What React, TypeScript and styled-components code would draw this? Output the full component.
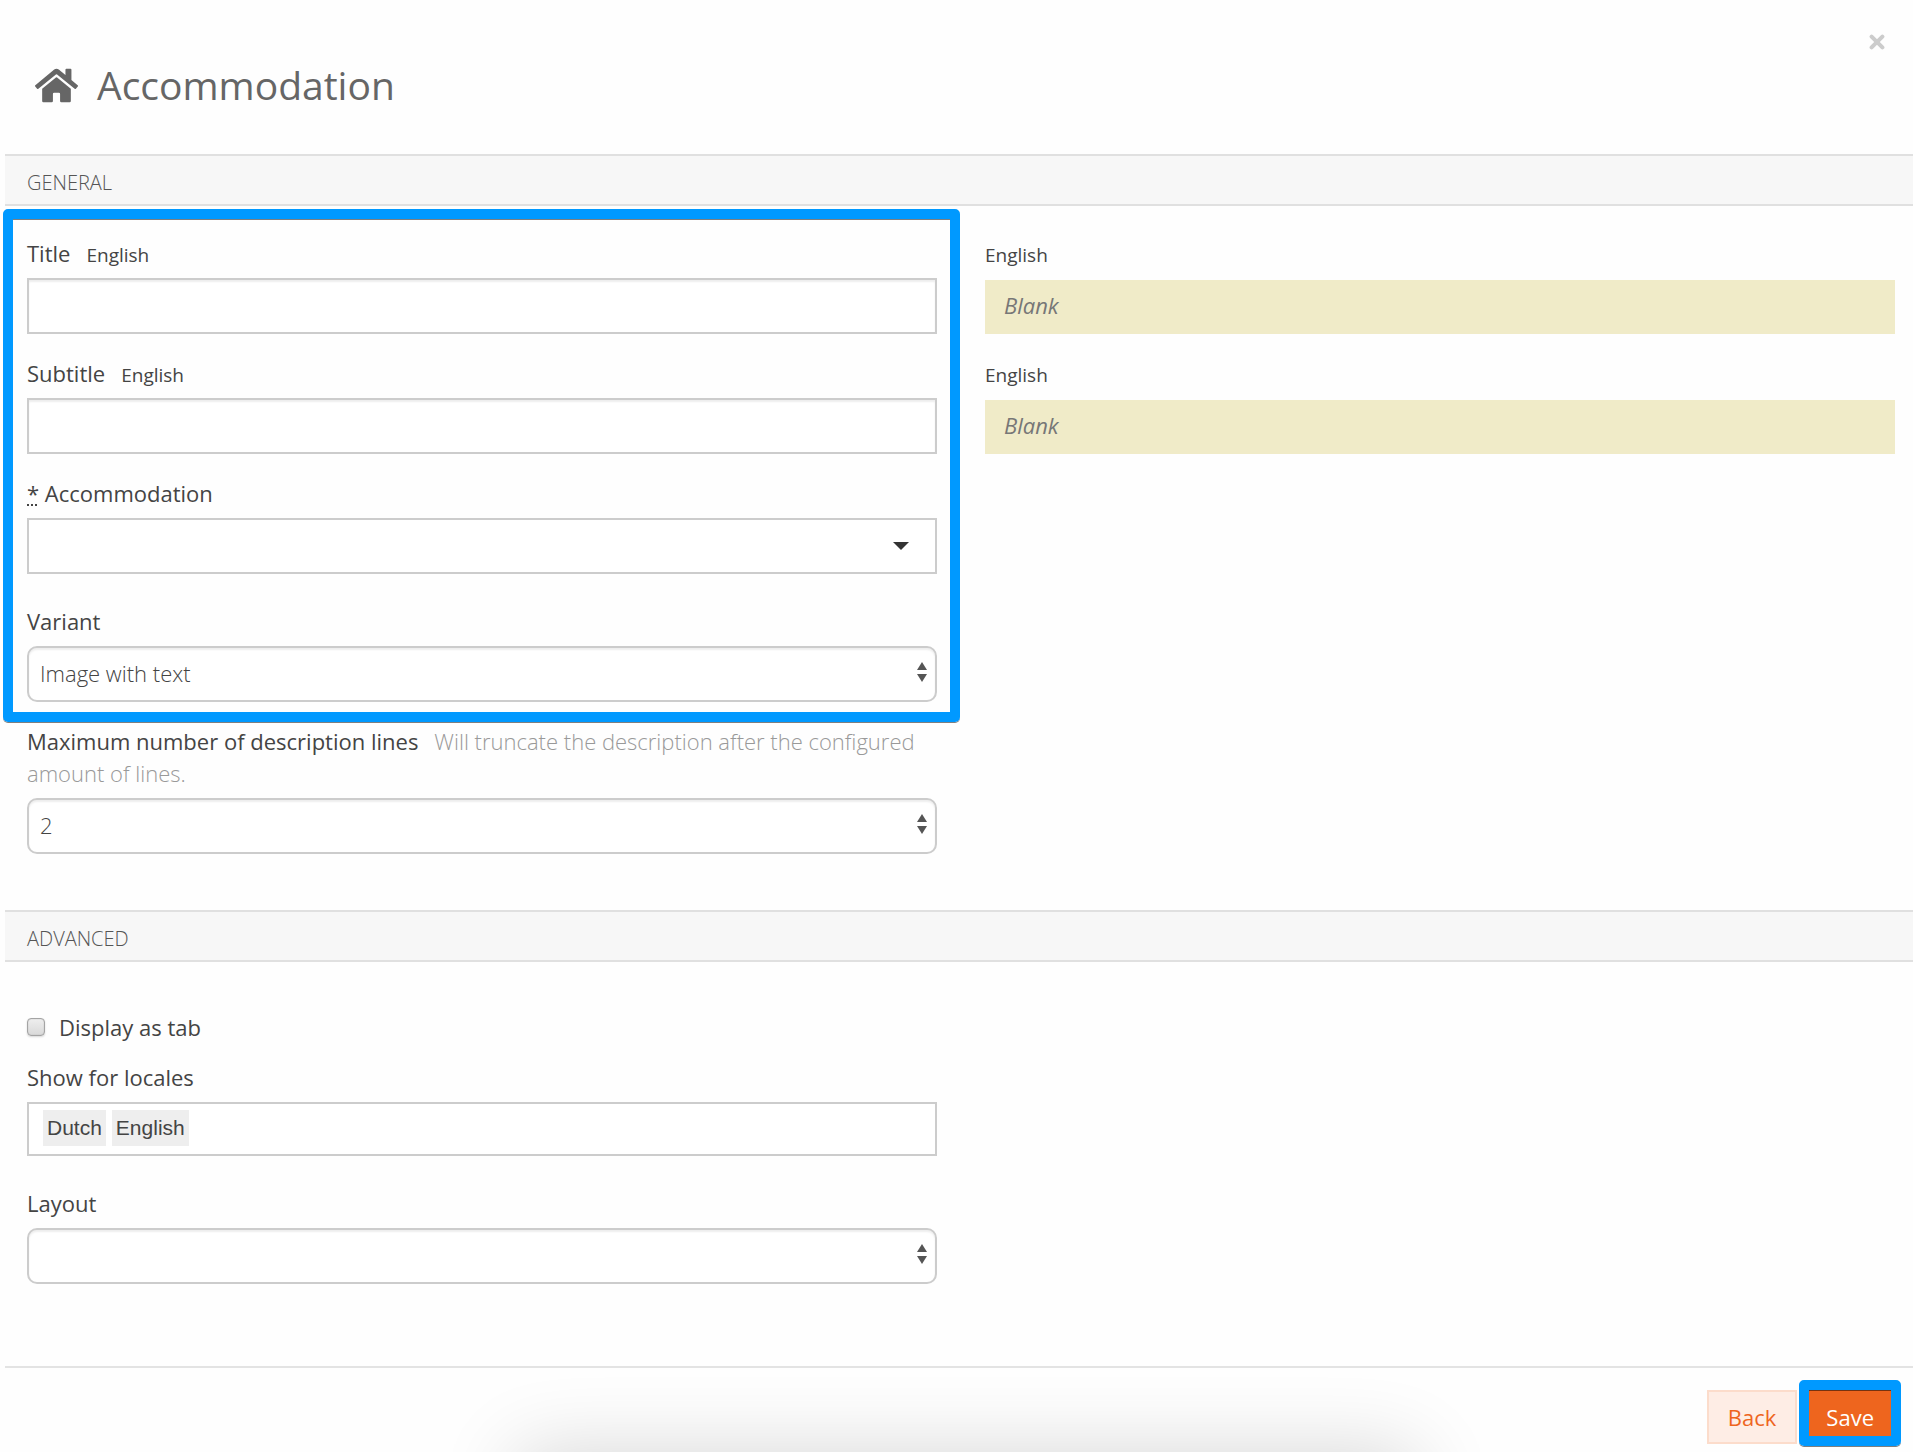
import React from "react";
import styled, { createGlobalStyle, css } from "styled-components";
import { FaHome } from "react-icons/fa";

const GlobalStyle = createGlobalStyle`
  *, *::before, *::after { box-sizing: border-box; }
  body {
    margin: 0;
    background: #fefefe;
    color: #444;
    font-family: "Open Sans", sans-serif;
    font-size: 22px;
    line-height: 32px;
  }
`;

const Page = styled.main`
  position: relative;
  overflow: hidden;
  min-height: 100vh;
  padding-left: 5px;
`;

const Header = styled.header`
  display: flex;
  justify-content: space-between;
  align-items: flex-start;
  height: 154px;
  padding: 32px 28px 0 30px;
`;

const Heading = styled.h1`
  display: flex;
  align-items: center;
  gap: 19px;
  margin: 27px 0 0;
  font-size: 39px;
  line-height: 52px;
  font-weight: 400;
  color: #666;
`;

const CloseButton = styled.button`
  display: flex;
  padding: 2px 0;
  border: 0;
  background: none;
  color: #ccc;
  cursor: pointer;
`;

const SectionTitle = styled.h2`
  margin: 0;
  padding: 13px 22px 7px;
  border: solid #e0e0e0;
  border-width: 2px 0;
  background: #f7f7f7;
  font-size: 20px;
  line-height: 28px;
  font-weight: 300;
  color: #555;
  text-transform: uppercase;
`;

const Columns = styled.div<{ $top: number; $bottom: number }>`
  display: grid;
  grid-template-columns: 1fr 1fr;
  gap: 48px;
  padding: ${(p) => p.$top}px 18px ${(p) => p.$bottom}px 22px;
`;

const Stack = styled.div`
  display: flex;
  flex-direction: column;
  min-width: 0;
`;

const Group = styled(Stack)`
  position: relative;
`;

const Highlight = styled.span<{ $inset: string }>`
  position: absolute;
  inset: ${(p) => p.$inset};
  border: 10px solid #0099ff;
  border-radius: 5px;
  box-shadow: 0 1px 0 rgba(0, 0, 0, 0.5), inset 0 1px 0 rgba(0, 0, 0, 0.5);
  pointer-events: none;
`;

const Field = styled.div<{ $gap?: number }>`
  display: flex;
  flex-direction: column;
  gap: 9px;
  margin-bottom: ${(p) => p.$gap ?? 23}px;
`;

const Label = styled.label`
  display: block;
`;

const Locale = styled.span<{ $spaced?: boolean }>`
  margin-left: ${(p) => (p.$spaced ? 16 : 0)}px;
  font-size: 19px;
  line-height: 1;
`;

const Hint = styled.span`
  margin-left: 16px;
  font-weight: 300;
  color: #999;
`;

const Required = styled.abbr`
  text-decoration: underline dotted 2px;
  text-underline-offset: 2px;
`;

const control = css`
  width: 100%;
  height: 56px;
  border: 2px solid #ccc;
  background: #fff;
  font: inherit;
  color: #444;
`;

const TextInput = styled.input`
  ${control}
  padding: 0 12px;
  box-shadow: inset 0 2px 2px rgba(0, 0, 0, 0.07);
`;

const SelectWrap = styled.div`
  position: relative;
  display: flex;
`;

const Select = styled.select<{ $plain?: boolean }>`
  ${control}
  appearance: none;
  padding: 0 40px 2px 11px;
  font-weight: 300;
  border-radius: ${(p) => (p.$plain ? 0 : 10)}px;
  box-shadow: ${(p) => (p.$plain ? "none" : "inset 0 2px 2px rgba(0, 0, 0, 0.07)")};
`;

const ArrowSlot = styled.span<{ $right: number; $top: number }>`
  position: absolute;
  top: ${(p) => p.$top}px;
  right: ${(p) => p.$right}px;
  display: flex;
  pointer-events: none;
`;

const Blank = styled.div`
  margin-top: 2px;
  padding: 9px 19px 13px;
  background: #f0ebc8;
  color: #777;
  font-style: italic;
`;

const CheckRow = styled.div`
  display: flex;
  align-items: center;
  gap: 14px;
  margin-bottom: 18px;
`;

const Checkbox = styled.input`
  appearance: none;
  width: 18px;
  height: 18px;
  margin: 0;
  border: 1px solid #a4a4a4;
  border-radius: 4px;
  background: linear-gradient(#eee, #d9d9d9);
  box-shadow: 0 1px 2px rgba(0, 0, 0, 0.15), inset 0 0 1px #999;
`;

const TagBox = styled.div`
  display: flex;
  gap: 6px;
  height: 54px;
  padding: 6px 14px;
  border: 2px solid #ccc;
  background: #fff;
`;

const Tag = styled.span`
  height: 36px;
  padding: 0 4px;
  background: #eee;
  color: #444;
  font: 21px/36px "Liberation Sans", sans-serif;
`;

const TagInput = styled.input`
  flex: 1;
  min-width: 0;
  border: 0;
  outline: 0;
  background: none;
  font: inherit;
`;

const Footer = styled.footer`
  position: relative;
  z-index: 1;
  display: flex;
  justify-content: flex-end;
  gap: 8px;
  padding: 22px 18px 8px;
  border-top: 2px solid #e3e3e3;
`;

const Action = styled.button<{ $primary?: boolean }>`
  height: 54px;
  padding: 0 19px;
  border: 2px solid ${(p) => (p.$primary ? "#ee651e" : "#fcdccb")};
  background: ${(p) => (p.$primary ? "#ee651e" : "#feede5")};
  color: ${(p) => (p.$primary ? "#fff" : "#ee651e")};
  font: inherit;
  cursor: pointer;
`;

const SaveWrap = styled.div`
  position: relative;
  display: flex;
`;

const BottomShadow = styled.div`
  position: absolute;
  top: 100%;
  left: 27%;
  right: 26%;
  height: 100px;
  box-shadow: 0 0 80px rgba(0, 0, 0, 0.16);
`;

const CloseIcon = () => (
  <svg width="16" height="16" viewBox="0 0 16 16" aria-hidden="true">
    <path d="M2.6 2.6l10.8 10.8M13.4 2.6L2.6 13.4" stroke="currentColor" strokeWidth="4" strokeLinecap="round" />
  </svg>
);

function SelectField({ id, label, hint, value, gap, plain }: {
  id: string; label: React.ReactNode; hint?: string; value: string; gap?: number; plain?: boolean;
}) {
  return (
    <Field $gap={gap}>
      <Label htmlFor={id}>
        {label}
        {hint && <Hint>{hint}</Hint>}
      </Label>
      <SelectWrap>
        <Select id={id} $plain={plain} defaultValue={value}>
          <option value={value}>{value}</option>
        </Select>
        {plain ? (
          <ArrowSlot $top={24} $right={28}>
            <svg width="16" height="8" aria-hidden="true"><path d="M0 0h16L8 8z" fill="#333" /></svg>
          </ArrowSlot>
        ) : (
          <ArrowSlot $top={16} $right={10}>
            <svg width="10" height="20" aria-hidden="true"><path d="M0 8L5 0l5 8zM0 12h10l-5 8z" fill="#555" /></svg>
          </ArrowSlot>
        )}
      </SelectWrap>
    </Field>
  );
}

function LocalizedField({ id, label }: { id: string; label: string }) {
  return (
    <Field>
      <Label htmlFor={id}>
        {label}
        <Locale $spaced>English</Locale>
      </Label>
      <TextInput id={id} type="text" />
    </Field>
  );
}

function Translation() {
  return (
    <Field>
      <div><Locale>English</Locale></div>
      <Blank>Blank</Blank>
    </Field>
  );
}

export default function App() {
  return (
    <Page>
      <GlobalStyle />
      <Header>
        <Heading>
          <FaHome size={43} aria-hidden="true" />
          Accommodation
        </Heading>
        <CloseButton type="button" aria-label="Close"><CloseIcon /></CloseButton>
      </Header>

      <SectionTitle>General</SectionTitle>
      <Columns $top={31} $bottom={56}>
        <Stack>
          <Group>
            <LocalizedField id="title" label="Title" />
            <LocalizedField id="subtitle" label="Subtitle" />
            <SelectField id="accommodation" label={<><Required title="required">*</Required> Accommodation</>} value="" gap={31} plain />
            <SelectField id="variant" label="Variant" value="Image with text" />
            <Highlight $inset="-28px -23px 3px -24px" />
          </Group>
          <SelectField
            id="lines"
            label="Maximum number of description lines"
            hint="Will truncate the description after the configured amount of lines."
            value="2"
            gap={0}
          />
        </Stack>
        <Stack>
          <Translation />
          <Translation />
        </Stack>
      </Columns>

      <SectionTitle>Advanced</SectionTitle>
      <Columns $top={49} $bottom={82}>
        <Stack>
          <CheckRow>
            <Checkbox id="tab" type="checkbox" />
            <Label htmlFor="tab">Display as tab</Label>
          </CheckRow>
          <Field $gap={31}>
            <Label htmlFor="locales">Show for locales</Label>
            <TagBox>
              <Tag>Dutch</Tag>
              <Tag>English</Tag>
              <TagInput id="locales" type="text" />
            </TagBox>
          </Field>
          <SelectField id="layout" label="Layout" value="" gap={0} />
        </Stack>
      </Columns>

      <Footer>
        <Action type="button">Back</Action>
        <SaveWrap>
          <Action type="submit" $primary>Save</Action>
          <Highlight $inset="-10px -6px -2px -6px" />
        </SaveWrap>
      </Footer>
      <BottomShadow />
    </Page>
  );
}
